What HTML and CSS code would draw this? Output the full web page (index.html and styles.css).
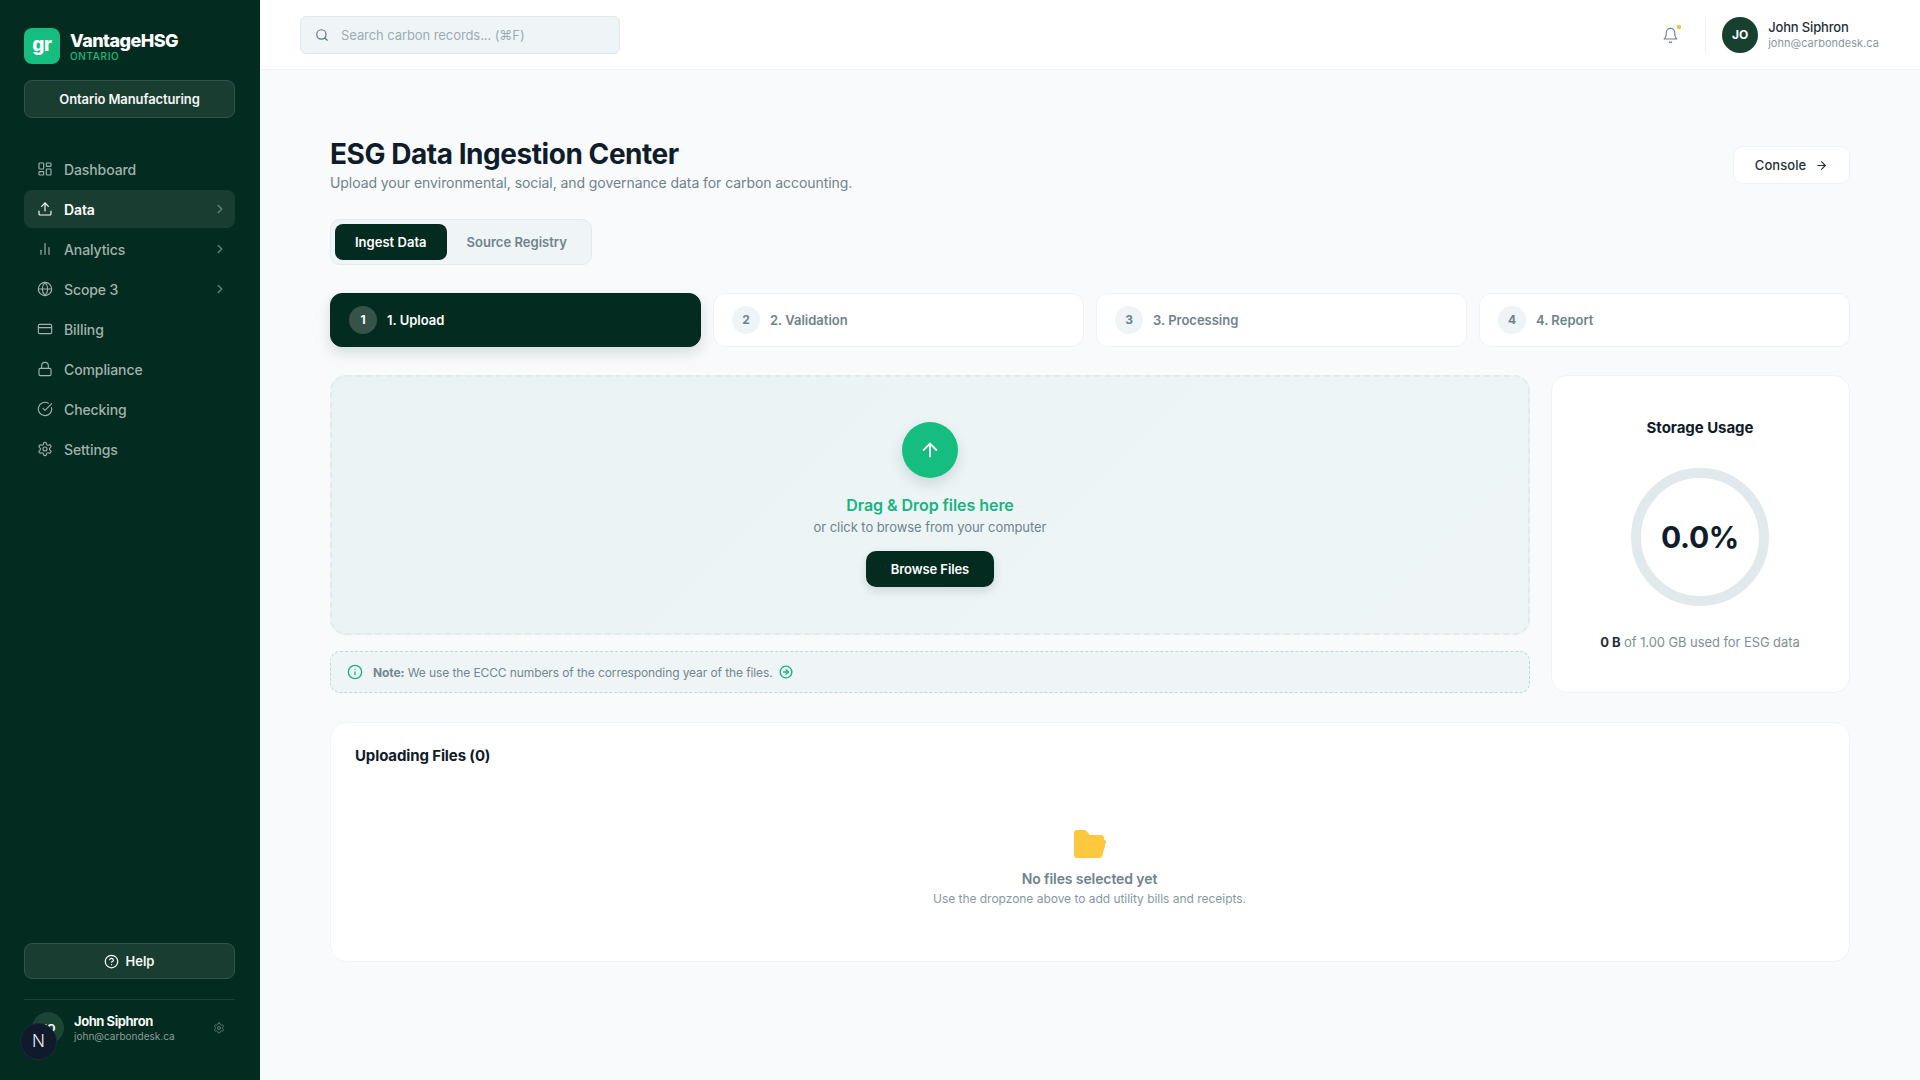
FILE: index.html
```html
<!DOCTYPE html>
<html lang="en">
<head>
<meta charset="utf-8">
<title>ESG Data Ingestion Center</title>
<link rel="stylesheet" href="styles.css">
</head>
<body>
<svg class="defs" width="0" height="0" aria-hidden="true">
  <symbol id="i-dash" viewBox="0 0 24 24"><rect x="3" y="3" width="7" height="9" rx="1"/><rect x="14" y="3" width="7" height="5" rx="1"/><rect x="14" y="12" width="7" height="9" rx="1"/><rect x="3" y="16" width="7" height="5" rx="1"/></symbol>
  <symbol id="i-upload" viewBox="0 0 24 24"><path d="M21 15v4a2 2 0 0 1-2 2H5a2 2 0 0 1-2-2v-4"/><path d="M17 8l-5-5-5 5"/><path d="M12 3v12"/></symbol>
  <symbol id="i-bars" viewBox="0 0 24 24"><path d="M18 20V10"/><path d="M12 20V4"/><path d="M6 20v-6"/></symbol>
  <symbol id="i-globe" viewBox="0 0 24 24"><circle cx="12" cy="12" r="10"/><path d="M12 2a14.5 14.5 0 0 0 0 20 14.5 14.5 0 0 0 0-20"/><path d="M2 12h20"/></symbol>
  <symbol id="i-card" viewBox="0 0 24 24"><rect x="2" y="5" width="20" height="14" rx="2"/><path d="M2 10h20"/></symbol>
  <symbol id="i-lock" viewBox="0 0 24 24"><rect x="3" y="11" width="18" height="11" rx="2"/><path d="M7 11V7a5 5 0 0 1 10 0v4"/></symbol>
  <symbol id="i-check" viewBox="0 0 24 24"><path d="M21.801 10A10 10 0 1 1 17 3.335"/><path d="m9 11 3 3L22 4"/></symbol>
  <symbol id="i-gear" viewBox="0 0 24 24"><path d="M12.22 2h-.44a2 2 0 0 0-2 2v.18a2 2 0 0 1-1 1.73l-.43.25a2 2 0 0 1-2 0l-.15-.08a2 2 0 0 0-2.73.73l-.22.38a2 2 0 0 0 .73 2.73l.15.1a2 2 0 0 1 1 1.72v.51a2 2 0 0 1-1 1.74l-.15.09a2 2 0 0 0-.73 2.73l.22.38a2 2 0 0 0 2.73.73l.15-.08a2 2 0 0 1 2 0l.43.25a2 2 0 0 1 1 1.73V20a2 2 0 0 0 2 2h.44a2 2 0 0 0 2-2v-.18a2 2 0 0 1 1-1.73l.43-.25a2 2 0 0 1 2 0l.15.08a2 2 0 0 0 2.73-.73l.22-.39a2 2 0 0 0-.73-2.73l-.15-.08a2 2 0 0 1-1-1.74v-.5a2 2 0 0 1 1-1.74l.15-.09a2 2 0 0 0 .73-2.73l-.22-.38a2 2 0 0 0-2.73-.73l-.15.08a2 2 0 0 1-2 0l-.43-.25a2 2 0 0 1-1-1.73V4a2 2 0 0 0-2-2z"/><circle cx="12" cy="12" r="3"/></symbol>
  <symbol id="i-chev" viewBox="0 0 24 24"><path d="m9 18 6-6-6-6"/></symbol>
  <symbol id="i-help" viewBox="0 0 24 24"><circle cx="12" cy="12" r="10"/><path d="M9.09 9a3 3 0 0 1 5.83 1c0 2-3 3-3 3"/><path d="M12 17h.01"/></symbol>
  <symbol id="i-search" viewBox="0 0 24 24"><circle cx="11" cy="11" r="8"/><path d="m21 21-4.3-4.3"/></symbol>
  <symbol id="i-bell" viewBox="0 0 24 24"><path d="M6 8a6 6 0 0 1 12 0c0 7 3 9 3 9H3s3-2 3-9"/><path d="M10.3 21a1.94 1.94 0 0 0 3.4 0"/></symbol>
  <symbol id="i-right" viewBox="0 0 24 24"><path d="M5 12h14"/><path d="m12 5 7 7-7 7"/></symbol>
  <symbol id="i-up" viewBox="0 0 24 24"><path d="m5 12 7-7 7 7"/><path d="M12 19V5"/></symbol>
  <symbol id="i-info" viewBox="0 0 24 24"><circle cx="12" cy="12" r="10"/><path d="M12 16v-4"/><path d="M12 8h.01"/></symbol>
  <symbol id="i-circle-right" viewBox="0 0 24 24"><circle cx="12" cy="12" r="10"/><path d="M8 12h8"/><path d="m12 16 4-4-4-4"/></symbol>
</svg>

<div class="app">
  <aside class="sidebar">
    <div class="brand">
      <div class="brand-mark">gr</div>
      <div class="brand-text">
        <div class="brand-name">VantageHSG</div>
        <div class="brand-sub">ONTARIO</div>
      </div>
    </div>
    <button class="tenant">Ontario Manufacturing</button>
    <nav class="nav">
      <a class="nav-item"><svg class="nav-icon"><use href="#i-dash"/></svg><span>Dashboard</span></a>
      <a class="nav-item active"><svg class="nav-icon"><use href="#i-upload"/></svg><span>Data</span><svg class="chev"><use href="#i-chev"/></svg></a>
      <a class="nav-item"><svg class="nav-icon"><use href="#i-bars"/></svg><span>Analytics</span><svg class="chev"><use href="#i-chev"/></svg></a>
      <a class="nav-item"><svg class="nav-icon"><use href="#i-globe"/></svg><span>Scope 3</span><svg class="chev"><use href="#i-chev"/></svg></a>
      <a class="nav-item"><svg class="nav-icon"><use href="#i-card"/></svg><span>Billing</span></a>
      <a class="nav-item"><svg class="nav-icon"><use href="#i-lock"/></svg><span>Compliance</span></a>
      <a class="nav-item"><svg class="nav-icon"><use href="#i-check"/></svg><span>Checking</span></a>
      <a class="nav-item"><svg class="nav-icon"><use href="#i-gear"/></svg><span>Settings</span></a>
    </nav>
    <div class="side-foot">
      <button class="help"><svg class="help-icon"><use href="#i-help"/></svg>Help</button>
      <div class="side-user">
        <div class="side-avatar">JO</div>
        <div class="side-user-text">
          <div class="side-user-name">John Siphron</div>
          <div class="side-user-mail">john@carbondesk.ca</div>
        </div>
        <svg class="side-gear"><use href="#i-gear"/></svg>
      </div>
    </div>
    <div class="next-badge">N</div>
  </aside>

  <div class="main">
    <header class="topbar">
      <div class="search">
        <svg class="search-icon"><use href="#i-search"/></svg>
        <span class="search-text">Search carbon records... (⌘F)</span>
      </div>
      <div class="top-right">
        <div class="bell"><svg class="bell-icon"><use href="#i-bell"/></svg><span class="bell-dot"></span></div>
        <div class="top-user">
          <div class="top-avatar">JO</div>
          <div>
            <div class="top-name">John Siphron</div>
            <div class="top-mail">john@carbondesk.ca</div>
          </div>
        </div>
      </div>
    </header>

    <main class="content">
      <div class="page-head">
        <div>
          <h1 class="page-title">ESG Data Ingestion Center</h1>
          <p class="page-sub">Upload your environmental, social, and governance data for carbon accounting.</p>
        </div>
        <button class="console">Console<svg class="console-icon"><use href="#i-right"/></svg></button>
      </div>

      <div class="tabs">
        <div class="tab active">Ingest Data</div>
        <div class="tab">Source Registry</div>
      </div>

      <div class="steps">
        <div class="step current"><span class="step-num">1</span><span>1. Upload</span></div>
        <div class="step"><span class="step-num">2</span><span>2. Validation</span></div>
        <div class="step"><span class="step-num">3</span><span>3. Processing</span></div>
        <div class="step"><span class="step-num">4</span><span>4. Report</span></div>
      </div>

      <div class="upload-grid">
        <div class="upload-col">
          <div class="dropzone">
            <div class="drop-circle"><svg class="drop-arrow"><use href="#i-up"/></svg></div>
            <div class="drop-title">Drag &amp; Drop files here</div>
            <div class="drop-sub">or click to browse from your computer</div>
            <button class="browse">Browse Files</button>
          </div>
          <div class="note">
            <svg class="note-icon"><use href="#i-info"/></svg>
            <span class="note-text"><b>Note:</b> We use the ECCC numbers of the corresponding year of the files.</span>
            <svg class="note-link"><use href="#i-circle-right"/></svg>
          </div>
        </div>
        <div class="storage">
          <div class="storage-title">Storage Usage</div>
          <div class="ring"><span class="ring-value">0.0%</span></div>
          <div class="storage-cap"><b>0 B</b> of 1.00 GB used for ESG data</div>
        </div>
      </div>

      <section class="files">
        <h2 class="files-title">Uploading Files (0)</h2>
        <div class="empty">
          <svg class="folder" viewBox="0 0 32 28"><path d="M3 0h7.500a2 2 0 0 1 1.500.7L16 5h11a3 3 0 0 1 3 3v1.500h-.5a2.500 2.500 0 0 1 2.400 3.100L28.200 26a3 3 0 0 1-2.900 2H3a3 3 0 0 1-3-3V3a3 3 0 0 1 3-3z"/></svg>
          <div class="empty-title">No files selected yet</div>
          <div class="empty-sub">Use the dropzone above to add utility bills and receipts.</div>
        </div>
      </section>
    </main>
  </div>
</div>
</body>
</html>
```

FILE: styles.css
```css
* { box-sizing: border-box; }
html, body { margin: 0; padding: 0; height: 100%; }
body {
  font-family: "Inter", "Noto Sans", sans-serif;
  background: #f8fafc;
  color: #0f1c2a;
  overflow: hidden;
}
button { font-family: inherit; cursor: pointer; }
svg { fill: none; stroke: currentColor; stroke-width: 2; stroke-linecap: round; stroke-linejoin: round; flex: none; }
.defs { position: absolute; }

.app { display: flex; height: 1080px; }

/* Sidebar */
.sidebar {
  position: relative;
  width: 260px;
  flex: none;
  background: #032b1f;
  padding: 28px 25px 0 24px;
  display: flex;
  flex-direction: column;
}
.brand { display: flex; align-items: center; gap: 10px; height: 36px; }
.brand-mark {
  width: 36px; height: 36px;
  border-radius: 8px;
  background: #15bd80;
  color: #fff;
  font: 800 19px/34px "Inter", sans-serif;
  letter-spacing: -0.3px;
  text-align: center;
}
.brand-name { font: 800 18px/18px "Inter", sans-serif; color: #fff; letter-spacing: -0.55px; }
.brand-sub { font: 500 10px/10px "Inter", sans-serif; color: #15bd80; letter-spacing: 0.65px; margin-top: 1px; }
.tenant {
  margin-top: 16px;
  height: 38px;
  border-radius: 8px;
  border: 1px solid #33534a;
  background: #1a3d31;
  color: #f4f7f6;
  font-size: 13px;
  font-weight: 600;
  letter-spacing: -0.1px;
}
.nav { margin-top: 32px; display: flex; flex-direction: column; gap: 2px; }
.nav-item {
  height: 38px;
  display: flex;
  align-items: center;
  gap: 11px;
  padding: 0 8px 0 13px;
  border-radius: 8px;
  color: #a2b2ad;
  font-size: 14px;
  font-weight: 500;
  letter-spacing: -0.1px;
}
.nav-item span { flex: 1; }
.nav-item.active { background: #1a3d31; color: #fff; font-weight: 600; }
.nav-icon { width: 16px; height: 16px; stroke-width: 1.7; }
.chev { width: 14px; height: 14px; color: #5f7d73; stroke-width: 2.8; }
.side-foot { margin-top: auto; }
.help {
  width: 100%;
  height: 36px;
  display: flex;
  align-items: center;
  justify-content: center;
  gap: 6px;
  border-radius: 8px;
  border: 1px solid #33534a;
  background: #1a3d31;
  color: #f4f7f6;
  font-size: 13px;
  font-weight: 600;
  letter-spacing: 0.05px;
}
.help-icon { width: 15px; height: 15px; }
.side-user {
  margin-top: 20px;
  border-top: 1px solid #1c4034;
  padding: 12px 10px 36px 8px;
  display: flex;
  align-items: center;
  gap: 10px;
}
.side-avatar {
  width: 32px; height: 32px;
  border-radius: 50%;
  background: #1a4535;
  color: #fff;
  font-size: 11px;
  font-weight: 700;
  line-height: 32px;
  text-align: center;
}
.side-user-text { flex: 1; }
.side-user-name { font-size: 13px; line-height: 16px; font-weight: 700; color: #f4f7f6; letter-spacing: -0.45px; }
.side-user-mail { font-size: 10px; line-height: 14px; color: #8a9e98; letter-spacing: 0.02px; }
.side-gear { width: 12px; height: 12px; color: #5f7d73; }
.next-badge {
  position: absolute;
  left: 20px;
  top: 1023px;
  width: 37px; height: 37px;
  border-radius: 50%;
  background: #0f1a2b;
  border: 1px solid #1d2a3a;
  color: #e9edf2;
  font: 300 17px/35px "Inter", sans-serif;
  text-align: center;
}

/* Main */
.main { flex: 1; min-width: 0; display: flex; flex-direction: column; }
.topbar {
  height: 70px;
  flex: none;
  background: #fff;
  border-bottom: 1px solid #eff3f5;
  padding: 16px 41px 0 40px;
  display: flex;
  justify-content: space-between;
  align-items: flex-start;
}
.search {
  width: 320px; height: 38px;
  background: #eff4f6;
  border: 1px solid #e1e8eb;
  border-radius: 6px;
  display: flex;
  align-items: center;
  gap: 12px;
  padding: 0 14px;
}
.search-icon { width: 14px; height: 14px; color: #5f747c; }
.search-text { font-size: 13px; color: #9badb4; letter-spacing: -0.08px; }
.top-right { display: flex; align-items: center; height: 38px; }
.bell { position: relative; width: 17px; height: 17px; color: #6f848c; }
.bell-icon { width: 17px; height: 17px; stroke-width: 1.6; display: block; }
.bell-dot { position: absolute; right: -2px; top: -2px; width: 4px; height: 4px; border-radius: 1px; background: #f8c53c; }
.top-user {
  margin-left: 26px;
  padding-left: 16px;
  border-left: 1px solid #eef2f4;
  display: flex;
  align-items: center;
  gap: 10px;
}
.top-avatar {
  width: 36px; height: 36px;
  border-radius: 50%;
  background: #17402f;
  color: #fff;
  font-size: 12px;
  font-weight: 700;
  line-height: 36px;
  text-align: center;
}
.top-name { font-size: 13px; line-height: 17px; font-weight: 500; color: #1d3038; margin-top: -1px; letter-spacing: -0.15px; }
.top-mail { font-size: 11px; line-height: 14px; color: #87999f; letter-spacing: 0.03px; }

.content { flex: 1; padding: 67px 70px 0; }
.page-head { display: flex; justify-content: space-between; align-items: flex-start; }
.page-title { margin: 0; font: 700 28px/34px "Inter", sans-serif; letter-spacing: -0.45px; color: #0f1c2a; }
.page-sub { margin: 2px 0 0; font-size: 14px; line-height: 20px; color: #6e838c; letter-spacing: -0.07px; }
.console {
  margin-top: 9px;
  width: 117px; height: 38px;
  border-radius: 10px;
  border: 1px solid #eff3f5;
  background: #fff;
  color: #1d3038;
  font-size: 13px;
  font-weight: 500;
  letter-spacing: 0.05px;
  display: flex;
  align-items: center;
  justify-content: center;
  gap: 9px;
}
.console-icon { width: 13px; height: 13px; }

.tabs {
  margin-top: 26px;
  width: max-content;
  height: 46px;
  padding: 4px;
  background: #eff4f6;
  border: 1px solid #e4ebee;
  border-radius: 10px;
  display: flex;
  align-items: center;
}
.tab {
  height: 36px;
  padding: 0 20px;
  border-radius: 8px;
  font-size: 13px;
  font-weight: 600;
  line-height: 36px;
  color: #6e838c;
  letter-spacing: 0.02px;
}
.tab.active { background: #032b1f; color: #fff; }

.steps { margin-top: 28px; display: grid; grid-template-columns: repeat(4, 1fr); gap: 12px; }
.step {
  height: 54px;
  display: flex;
  align-items: center;
  gap: 10px;
  padding: 0 18px;
  background: #fff;
  border: 1px solid #eff3f5;
  border-radius: 12px;
  font-size: 13px;
  font-weight: 600;
  color: #6e838c;
  letter-spacing: 0;
}
.step-num {
  width: 28px; height: 28px;
  border-radius: 50%;
  background: #eff4f6;
  color: #6e838c;
  font-size: 12px;
  font-weight: 700;
  line-height: 28px;
  text-align: center;
}
.step.current {
  background: #032b1f;
  border-color: #032b1f;
  color: #fff;
  box-shadow: 0 6px 14px rgba(3, 43, 31, 0.14);
}
.step.current .step-num { background: #36534a; color: #fff; }

.upload-grid { margin-top: 28px; display: grid; grid-template-columns: 1fr 299px; gap: 21px; }
.upload-col { display: flex; flex-direction: column; gap: 16px; }
.dropzone {
  height: 260px;
  border: 2px dashed #e1eaec;
  border-radius: 16px;
  background: linear-gradient(135deg, #e9f3f4, #eff5f7);
  display: flex;
  flex-direction: column;
  align-items: center;
  padding-top: 45px;
}
.drop-circle {
  width: 56px; height: 56px;
  border-radius: 50%;
  background: #15bd80;
  color: #fff;
  display: flex;
  align-items: center;
  justify-content: center;
  box-shadow: 0 6px 14px rgba(15, 60, 50, 0.14);
}
.drop-arrow { width: 22px; height: 22px; stroke-width: 2; }
.drop-title { margin-top: 17px; font-size: 16px; line-height: 20px; font-weight: 600; color: #15b580; letter-spacing: -0.05px; }
.drop-sub { margin-top: 3px; font-size: 13px; line-height: 18px; color: #6e838c; letter-spacing: -0.06px; }
.browse {
  margin-top: 15px;
  width: 128px; height: 36px;
  border: none;
  border-radius: 10px;
  background: #032b1f;
  color: #fff;
  font-size: 13px;
  font-weight: 600;
  letter-spacing: -0.1px;
  box-shadow: 0 4px 10px rgba(3, 43, 31, 0.14);
}
.note {
  height: 42px;
  border: 1px dashed #bcdad2;
  border-radius: 10px;
  background: #eff5f6;
  display: flex;
  align-items: center;
  padding: 0 16px;
  gap: 10px;
  font-size: 12px;
  color: #73878f;
  letter-spacing: -0.1px;
}
.note b { font-weight: 700; }
.note-icon { width: 16px; height: 16px; color: #15b580; }
.note-link { width: 14px; height: 14px; color: #15b580; stroke-width: 2.4; margin-left: -4px; }

.storage {
  background: #fff;
  border: 1px solid #f0f4f6;
  border-radius: 16px;
  display: flex;
  flex-direction: column;
  align-items: center;
  padding: 42px 1px 0 0;
}
.storage-title { font: 700 15px/20px "Inter", sans-serif; letter-spacing: -0.05px; color: #0f1c2a; }
.ring {
  margin-top: 30px;
  width: 138px; height: 138px;
  border-radius: 50%;
  border: 10px solid #e2e9ec;
  display: flex;
  align-items: center;
  justify-content: center;
}
.ring-value { font: 700 30px/38px "Inter", sans-serif; color: #0f1c2a; letter-spacing: -0.3px; }
.storage-cap { margin-top: 27px; font-size: 13px; line-height: 18px; color: #7e9097; letter-spacing: -0.08px; }
.storage-cap b { font-weight: 700; color: #1d3038; }

.files {
  margin-top: 29px;
  height: 240px;
  background: #fff;
  border: 1px solid #f0f4f6;
  border-radius: 16px;
  padding: 23px 24px 0;
}
.files-title { margin: 0; font: 700 15px/20px "Inter", sans-serif; letter-spacing: -0.12px; color: #0f1c2a; }
.empty { margin-top: 64px; display: flex; flex-direction: column; align-items: center; padding-right: 1px; }
.folder { width: 32px; height: 28px; fill: #fdc83e; stroke: none; }
.empty-title { margin-top: 11px; font-size: 14px; line-height: 20px; font-weight: 600; color: #6e838c; letter-spacing: -0.1px; }
.empty-sub { font-size: 12px; line-height: 18px; color: #87999f; margin-top: 1px; letter-spacing: -0.03px; }
```
